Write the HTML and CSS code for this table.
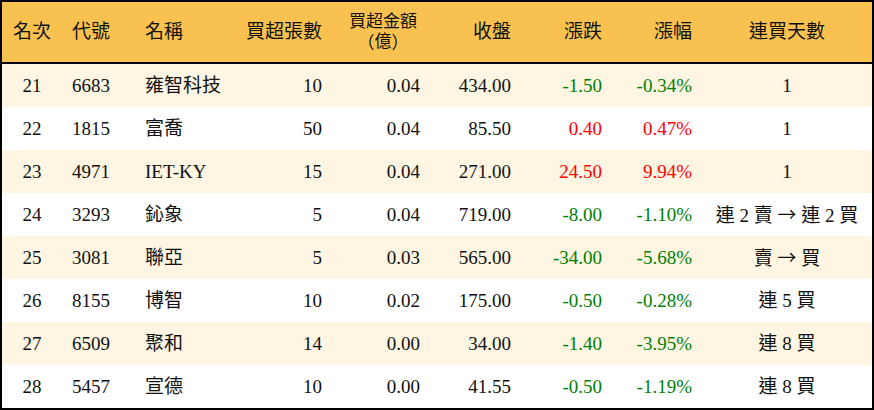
FILE: index.html
```html
<!DOCTYPE html>
<html lang="zh-Hant">
<head>
<meta charset="utf-8">
<title>買超排行</title>
<link rel="stylesheet" href="styles.css">
</head>
<body>
<div class="table">
  <div class="row head">
    <div class="c center">名次</div>
    <div class="c left">代號</div>
    <div class="c left">名稱</div>
    <div class="c right">買超張數</div>
    <div class="c right two"><span class="line">買超金額</span><span class="line"><span class="pl">（</span>億<span class="pr">）</span></span></div>
    <div class="c right">收盤</div>
    <div class="c right">漲跌</div>
    <div class="c right">漲幅</div>
    <div class="c center">連買天數</div>
  </div>
  <div class="row odd">
    <div class="c center">21</div><div class="c left">6683</div><div class="c left">雍智科技</div><div class="c right">10</div><div class="c right">0.04</div><div class="c right">434.00</div><div class="c right down">-1.50</div><div class="c right down">-0.34%</div><div class="c center">1</div>
  </div>
  <div class="row">
    <div class="c center">22</div><div class="c left">1815</div><div class="c left">富喬</div><div class="c right">50</div><div class="c right">0.04</div><div class="c right">85.50</div><div class="c right up">0.40</div><div class="c right up">0.47%</div><div class="c center">1</div>
  </div>
  <div class="row odd">
    <div class="c center">23</div><div class="c left">4971</div><div class="c left">IET-KY</div><div class="c right">15</div><div class="c right">0.04</div><div class="c right">271.00</div><div class="c right up">24.50</div><div class="c right up">9.94%</div><div class="c center">1</div>
  </div>
  <div class="row">
    <div class="c center">24</div><div class="c left">3293</div><div class="c left">鈊象</div><div class="c right">5</div><div class="c right">0.04</div><div class="c right">719.00</div><div class="c right down">-8.00</div><div class="c right down">-1.10%</div><div class="c center">連 2 賣 <span class="arrow">→</span> 連 2 買</div>
  </div>
  <div class="row odd">
    <div class="c center">25</div><div class="c left">3081</div><div class="c left">聯亞</div><div class="c right">5</div><div class="c right">0.03</div><div class="c right">565.00</div><div class="c right down">-34.00</div><div class="c right down">-5.68%</div><div class="c center">賣 <span class="arrow">→</span> 買</div>
  </div>
  <div class="row">
    <div class="c center">26</div><div class="c left">8155</div><div class="c left">博智</div><div class="c right">10</div><div class="c right">0.02</div><div class="c right">175.00</div><div class="c right down">-0.50</div><div class="c right down">-0.28%</div><div class="c center">連 5 買</div>
  </div>
  <div class="row odd">
    <div class="c center">27</div><div class="c left">6509</div><div class="c left">聚和</div><div class="c right">14</div><div class="c right">0.00</div><div class="c right">34.00</div><div class="c right down">-1.40</div><div class="c right down">-3.95%</div><div class="c center">連 8 買</div>
  </div>
  <div class="row">
    <div class="c center">28</div><div class="c left">5457</div><div class="c left">宣德</div><div class="c right">10</div><div class="c right">0.00</div><div class="c right">41.55</div><div class="c right down">-0.50</div><div class="c right down">-1.19%</div><div class="c center">連 8 買</div>
  </div>
</div>
</body>
</html>
```
FILE: styles.css
```css
html, body {
  margin: 0;
  padding: 0;
  background: #ffffff;
}
body {
  font-family: "Liberation Serif", "Noto Sans CJK TC", serif;
  font-size: 19px;
  color: #111111;
}
.table {
  width: 874px;
  height: 410px;
  box-sizing: border-box;
  border: 2px solid #000000;
  overflow: hidden;
}
.row {
  display: grid;
  grid-template-columns: 60px 73px 95px 102px 98px 91px 91px 90px 1fr;
  height: 43px;
  align-items: center;
  background: #ffffff;
}
.row.odd {
  background: #fef6e3;
}
.row.head {
  height: 60px;
  background: #f9c250;
  border-bottom: 2px solid #000000;
}
.c {
  padding: 0 10px;
  white-space: nowrap;
  line-height: 22px;
}
.left { text-align: left; }
.right { text-align: right; }
.center { text-align: center; }
.two {
  display: flex;
  flex-direction: column;
  align-items: center;
  gap: 2px;
  padding-right: 10px;
  padding-left: 14px;
}
.line {
  display: block;
  height: 18px;
  line-height: 18px;
  font-size: 17px;
  overflow: visible;
}
.pl, .pr {
  display: inline-block;
  width: 1em;
  line-height: 18px;
  vertical-align: top;
  font-family: "Noto Sans CJK TC", sans-serif;
}
.pl { text-align: right; }
.pr { text-align: left; }
.arrow {
  font-family: "Noto Sans CJK TC", sans-serif;
}
.up { color: #ff0000; }
.down { color: #008000; }
```
